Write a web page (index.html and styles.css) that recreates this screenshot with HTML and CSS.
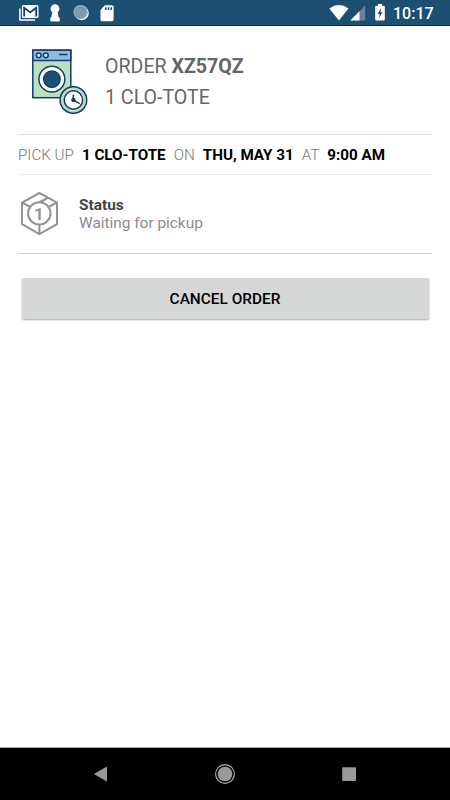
FILE: index.html
```html
<!DOCTYPE html>
<html lang="en">
<head>
    <meta charset="UTF-8">
    <meta name="viewport" content="width=device-width, initial-scale=1.0">
    <title>Order XZ57QZ</title>
    <link rel="stylesheet" href="styles.css">
</head>
<body>
    <div class="status-bar">
        <div class="notifications">
            <!-- mail -->
            <svg width="22" height="18" viewBox="0 0 22 18">
                <path d="M1.9 4.5V16.1H17" fill="none" stroke="#fff" stroke-width="1.5"/>
                <rect x="3.9" y="0.9" width="16.6" height="13.2" rx="1.5" fill="#fff"/>
                <path d="M6.2 12.6V3.8L12.2 8.4L18.2 3.8V12.6" fill="none" stroke="#12406b" stroke-width="1.8"/>
            </svg>
            <!-- keyhole -->
            <svg class="keyhole" width="12" height="18" viewBox="0 0 12 18">
                <path d="M6 0.2a4.5 4.5 0 0 1 2.7 8L9.6 13Q10.8 13.6 10.8 15.2V16.4Q10.8 17.4 9.8 17.4H2.2Q1.2 17.4 1.2 16.4V15.2Q1.2 13.6 2.4 13L3.3 8.2A4.5 4.5 0 0 1 6 0.2Z" fill="#fff"/>
            </svg>
            <!-- sync -->
            <svg class="sync" width="16" height="17" viewBox="0 0 16 17">
                <circle cx="8.6" cy="9" r="7.2" fill="#fff"/>
                <circle cx="7.6" cy="8.1" r="7.1" fill="#7a9bb0"/>
                <circle cx="7.6" cy="8.1" r="6.6" fill="none" stroke="#a9bdcb" stroke-width="1.1" stroke-dasharray="1 1"/>
            </svg>
            <!-- sd card -->
            <svg class="sd-card" width="14" height="17" viewBox="0 0 14 17">
                <path d="M5 0.3H12Q13.6 0.3 13.6 1.8V14.7Q13.6 16.2 12 16.2H2Q0.5 16.2 0.5 14.7V5Z" fill="#fff"/>
                <path d="M5.8 2.3V5M8.5 2.3V5M11.2 2.3V5" stroke="#1a4a6c" stroke-width="1.5"/>
            </svg>
        </div>
        <div class="system">
            <!-- wifi -->
            <svg width="20" height="17" viewBox="0 0 20 17">
                <path d="M0.3 4.4Q10 -2.4 19.5 4.4L9.9 16.4Z" fill="#fff"/>
            </svg>
            <!-- signal -->
            <svg class="signal" width="16" height="16" viewBox="0 0 16 16">
                <path d="M0.3 15.6L15.2 0.5V15.6Z" fill="#658499"/>
                <path d="M0.3 15.6L9.5 6.3V15.6Z" fill="#fff"/>
            </svg>
            <!-- battery -->
            <svg class="battery" width="10" height="17" viewBox="0 0 10 17">
                <path d="M3 0.1H7V1.7H8.6Q9.8 1.7 9.8 2.9V15.3Q9.8 16.6 8.6 16.6H1.4Q0.2 16.6 0.2 15.3V2.9Q0.2 1.7 1.4 1.7H3Z" fill="#fff"/>
                <path d="M6 4.2L2.6 10H4.6L4.1 14L7.4 8.3H5.5Z" fill="#1a4a6c"/>
            </svg>
            <span class="clock">10:17</span>
        </div>
    </div>

    <main class="content">
        <div class="order">
            <svg class="washer" width="60" height="68" viewBox="0 0 60 68">
                <g stroke="#163b6d" stroke-width="1.5">
                    <rect x="2.8" y="2.2" width="38" height="47.5" fill="#bce0bd"/>
                    <rect x="2.8" y="2.2" width="38" height="10.3" fill="#8cbce0"/>
                    <circle cx="8.7" cy="7.3" r="2.4" fill="#d5e7f4"/>
                    <circle cx="15.8" cy="7.3" r="2.4" fill="#d5e7f4"/>
                    <path d="M29 6.5H37.5"/>
                    <circle cx="21.9" cy="31.2" r="12.9" fill="#fff"/>
                    <circle cx="21.9" cy="31.2" r="8.2" fill="#1a5276"/>
                    <circle cx="43.4" cy="52" r="13.3" fill="#bce0bd"/>
                    <circle cx="43.4" cy="52" r="9.2" fill="#fff"/>
                    <path d="M43.3 46.8V52L49.7 55.6" fill="none"/>
                </g>
                <circle cx="43.4" cy="52" r="2.2" fill="#163b6d"/>
            </svg>
            <div class="order-text">
                <div>ORDER <b>XZ57QZ</b></div>
                <div>1 CLO-TOTE</div>
            </div>
        </div>

        <div class="pickup">
            <span>PICK UP</span>
            <b>1 CLO-TOTE</b>
            <span>ON</span>
            <b>THU, MAY 31</b>
            <span>AT</span>
            <b>9:00 AM</b>
        </div>

        <div class="status">
            <svg class="box" width="40" height="46" viewBox="0 0 40 46">
                <g fill="none" stroke="#949494" stroke-width="2">
                    <path d="M19.4 2L37 11.5V33.2L19.4 43L2 33.2V11.5Z"/>
                    <path d="M2 11.5L10.5 16M37 11.5L28.5 16M19.4 34V43M11.5 15.5L28 6.7M20.5 11.4L28 6.7"/>
                    <circle cx="19.3" cy="22.4" r="11.2" fill="#fff"/>
                </g>
                <text x="18.9" y="28.6" class="box-number">1</text>
            </svg>
            <div class="status-text">
                <b>Status</b>
                <div>Waiting for pickup</div>
            </div>
        </div>

        <button class="cancel">CANCEL ORDER</button>
    </main>

    <div class="nav-bar">
        <svg width="22" height="22" viewBox="0 0 22 22"><path d="M3.8 11L17 3.5V18.5Z" fill="#999"/></svg>
        <svg width="22" height="22" viewBox="0 0 22 22">
            <circle cx="11" cy="11" r="9.4" fill="none" stroke="#b0b0b0" stroke-width="1.1"/>
            <circle cx="11" cy="11" r="7.3" fill="#999"/>
        </svg>
        <svg width="22" height="22" viewBox="0 0 22 22"><rect x="4.2" y="4.2" width="13.8" height="13.8" rx="0.5" fill="#999"/></svg>
    </div>
</body>
</html>
```

FILE: styles.css
```css
* {
  box-sizing: border-box;
}

body {
  margin: 0;
  height: 800px;
  display: flex;
  flex-direction: column;
  background-color: white;
  font-family: Roboto, sans-serif;
}

svg {
  display: block;
  flex: none;
}

/* Top bar */
.status-bar {
  display: flex;
  justify-content: space-between;
  height: 26px;
  padding: 4px 18px 0 18px;
  background-color: #1c4f70;
  border-bottom: 1px solid #082951;
  color: white;
}

.notifications,
.system {
  display: flex;
  align-items: flex-start;
}

.keyhole {
  margin-left: 9px;
}

.sync {
  margin-left: 12px;
}

.sd-card {
  margin: 1px 0 0 11px;
}

.signal {
  margin: 1px 0 0 1px;
}

.battery {
  margin-left: 9px;
}

.clock {
  margin-left: 8px;
  width: 39px;
  font-size: 16px;
  font-weight: 500;
  line-height: 20px;
  white-space: nowrap;
}

/* Order */
.content {
  flex: 1;
  padding: 0 18px;
}

.order {
  display: flex;
  height: 109px;
  padding: 22px 0 0 12px;
  border-bottom: 1px solid #dedede;
}

.order-text {
  margin: 3px 0 0 15px;
  font-size: 19.6px;
  line-height: 31px;
  color: #666;
}

.pickup {
  display: flex;
  align-items: center;
  gap: 8px;
  height: 40px;
  border-bottom: 1px solid #e8e8e8;
  font-size: 15.2px;
  white-space: nowrap;
}

.pickup b {
  color: black;
}

.pickup span {
  font-weight: 300;
  color: #777;
}

.status {
  display: flex;
  height: 79px;
  padding: 16px 0 0 2px;
  border-bottom: 1px solid #d3d3d3;
}

.box-number {
  font-family: Roboto, sans-serif;
  font-size: 17px;
  font-weight: 700;
  text-anchor: middle;
  fill: #949494;
}

.status-text {
  margin: 5px 0 0 19px;
  font-size: 15.4px;
  line-height: 18px;
  color: #8c8c8c;
}

.status-text b {
  color: #444;
}

.cancel {
  display: block;
  width: 407px;
  height: 41px;
  margin: 24px 0 0 3.5px;
  padding: 0;
  border: none;
  border-radius: 2px;
  background-color: #d6d8d7;
  box-shadow: 0 1px 2px rgba(0, 0, 0, 0.35);
  font-family: Roboto, sans-serif;
  font-size: 15.4px;
  font-weight: 500;
  color: black;
}

/* Bottom bar */
.nav-bar {
  display: flex;
  justify-content: space-between;
  align-items: center;
  height: 53px;
  padding: 0 90px;
  background-color: black;
  border-top: 1px solid #aaa;
}
```
